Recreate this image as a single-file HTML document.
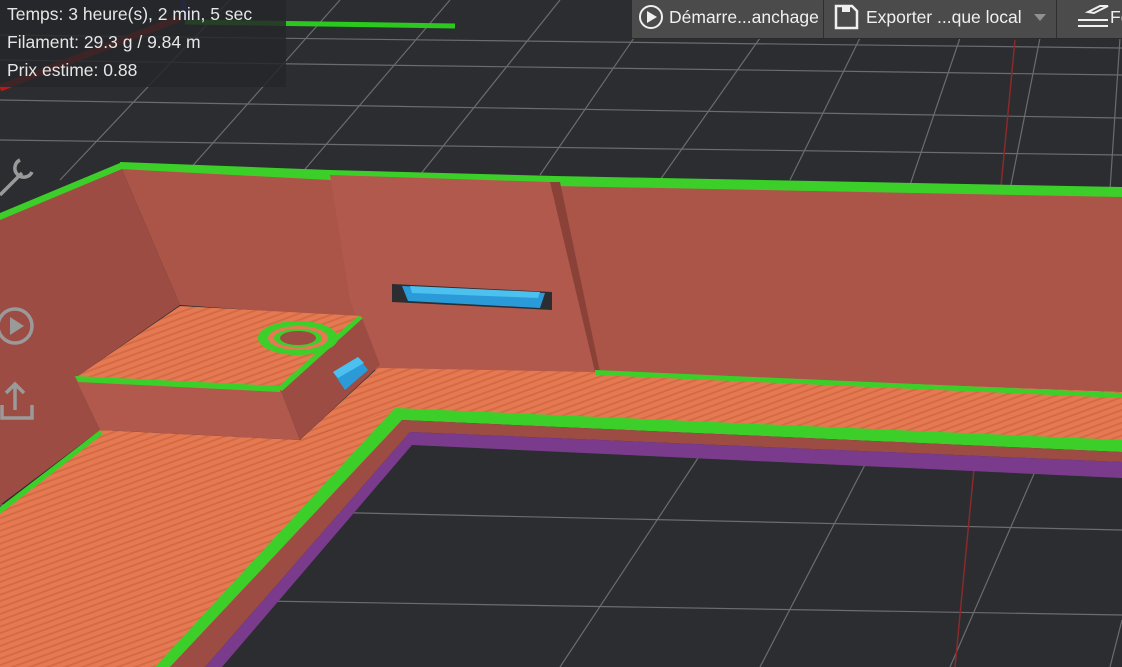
<!DOCTYPE html>
<html><head><meta charset="utf-8"><style>
html,body{margin:0;padding:0;width:1122px;height:667px;overflow:hidden;background:#2b2d30;font-family:"Liberation Sans","DejaVu Sans",sans-serif}
#info{position:absolute;left:0;top:0;width:286px;height:87px;background:rgba(38,39,41,0.85);color:#e6e6e6;font-size:17.5px}
#info div{position:absolute;left:7px}
#tb{position:absolute;left:632px;top:0;width:490px;height:38px;background:#4b4b4b;border-bottom:1px solid #2a2a2a;color:#f0f0f0;font-size:17.5px}
.t{position:absolute;top:7px;white-space:nowrap}
.sep{position:absolute;top:0;width:1px;height:38px;background:#2f2f2f}
</style></head><body>
<svg width="1122" height="667" style="position:absolute;left:0;top:0">
<defs>
<pattern id="st" width="6" height="6" patternUnits="userSpaceOnUse" patternTransform="rotate(70)">
<rect width="6" height="6" fill="#e57a52"/><rect width="2" height="6" fill="#d66a45"/></pattern>
</defs>
<rect width="1122" height="667" fill="#2b2d30"/>
<g stroke="#6a6c70" stroke-width="1.2" fill="none">
<path d="M0,100 L1122,118 M0,140 L1122,155 M0,60 L1122,75 M0,35 L1122,48 M0,505 L1122,530 M200,600 L1122,615"/>
<path d="M60,180 L230,0 M180,180 L340,0 M300,175 L450,0 M420,175 L560,0 M540,175 L660,0 M660,180 L760,38 M790,180 L860,38 M910,185 L960,38 M1010,190 L1040,38 M1110,190 L1120,38"/>
<path d="M560,667 L700,455 M760,667 L870,455 M950,667 L1040,460 M1110,667 L1122,620"/>
</g>
<path d="M1015,40 L955,667" stroke="#8a2a2a" stroke-width="1.5"/>
<path d="M0,88 L180,18" stroke="#c01818" stroke-width="7"/>
<path d="M185,22 L455,26" stroke="#2bc81e" stroke-width="5"/>
<path d="M182,0 L188,20" stroke="#2030c0" stroke-width="4"/>
<polygon points="120,165 330,174 555,178 1122,188 1122,395 595,372 380,368 365,318 180,305" fill="#ab5448"/>
<polygon points="120,162 330,170 555,176 1122,187 1122,197 555,186 330,180 120,169" fill="#3ccf2a"/>
<polygon points="330,175 550,182 595,372 375,370 350,300" fill="#b0594c"/>
<polygon points="550,182 560,182 600,372 595,372" fill="#8a4238"/>
<polygon points="0,215 120,165 180,305 75,378 100,430 0,505" fill="#9c4c42"/>
<polygon points="0,213 120,163 122,169 0,220" fill="#3ccf2a"/>
<polygon points="392,284 552,292 552,310 392,302" fill="#2b2d30"/>
<polygon points="402,286 545,293 540,308 408,301" fill="#2a9ad8"/>
<polygon points="410,286 540,292 538,298 412,293" fill="#4cc0ee"/>
<polygon points="378,368 595,372 1122,392 1122,445 395,410 300,440" fill="url(#st)"/>
<polygon points="595,370 1122,393 1122,398 595,375" fill="#3ccf2a"/>
<polygon points="0,510 100,430 300,440 395,410 405,430 200,667 0,667" fill="url(#st)"/>
<polygon points="0,507 100,430 103,434 0,514" fill="#3ccf2a"/>
<polygon points="155,667 395,408 1122,440 1122,452 402,420 170,667" fill="#3ccf2a"/>
<polygon points="170,667 402,420 1122,452 1122,462 410,432 205,667" fill="#9c4c42"/>
<polygon points="205,667 410,432 1122,462 1122,478 412,445 222,667" fill="#7b3b8c"/>
<polygon points="75,378 280,388 300,440 100,430" fill="#b0594c"/>
<polygon points="280,388 362,318 380,365 300,440" fill="#9c4c42"/>
<polygon points="75,378 180,306 362,316 280,388" fill="url(#st)"/>
<polygon points="75,376 280,386 280,392 78,382" fill="#3ccf2a"/>
<polygon points="277,388 358,316 363,318 282,391" fill="#3ccf2a"/>
<ellipse cx="298" cy="338" rx="40" ry="17" fill="#3ccf2a"/>
<ellipse cx="298" cy="338" rx="30" ry="12" fill="#e57a52"/>
<ellipse cx="298" cy="338" rx="24" ry="9" fill="#3ccf2a"/>
<ellipse cx="298" cy="338" rx="18" ry="7" fill="#9c4c42"/>
<polygon points="333,372 358,357 368,370 345,390" fill="#2a9ad8"/>
<polygon points="333,372 358,357 364,363 338,378" fill="#4cc0ee"/>
<g stroke="#9a9a9a" stroke-width="3.5" fill="none">
<path d="M0,195 L22,173 M20,160 a9,9 0 1 0 12,12"/>
<circle cx="15" cy="326" r="17"/>
<path d="M15,410 L15,385 M6,393 L15,384 L24,393 M2,405 L2,418 L32,418 L32,405"/>
</g>
<polygon points="10,317 10,335 24,326" fill="#9a9a9a"/>
</svg>
<div id="info"><div style="top:4px">Temps: 3 heure(s), 2 min, 5 sec</div><div style="top:32px">Filament: 29.3 g / 9.84 m</div><div style="top:60px">Prix estime: 0.88</div></div>
<div id="tb">
<svg width="490" height="38" style="position:absolute;left:0;top:0">
<circle cx="19" cy="17" r="11" stroke="#f0f0f0" stroke-width="2" fill="none"/>
<polygon points="15,11 15,23 25,17" fill="#f0f0f0"/>
<path d="M204,6 h16 l5,5 v17 h-21 z" stroke="#f0f0f0" stroke-width="2.5" fill="none"/>
<rect x="210" y="6" width="8" height="6" fill="#f0f0f0"/>
<polygon points="402,14 414,14 408,21" fill="#909090"/>
<path d="M456,12 l12,-6 l8,0 l-14,7 z M446,20 l30,0 M446,26 l30,0" stroke="#f0f0f0" stroke-width="2" fill="none"/>
</svg>
<div class="t" style="left:37px">Démarre...anchage</div>
<div class="sep" style="left:191px"></div>
<div class="t" style="left:234px">Exporter ...que local</div>
<div class="sep" style="left:424px"></div>
<div class="t" style="left:478px">Fe</div>
</div>
</body></html>
